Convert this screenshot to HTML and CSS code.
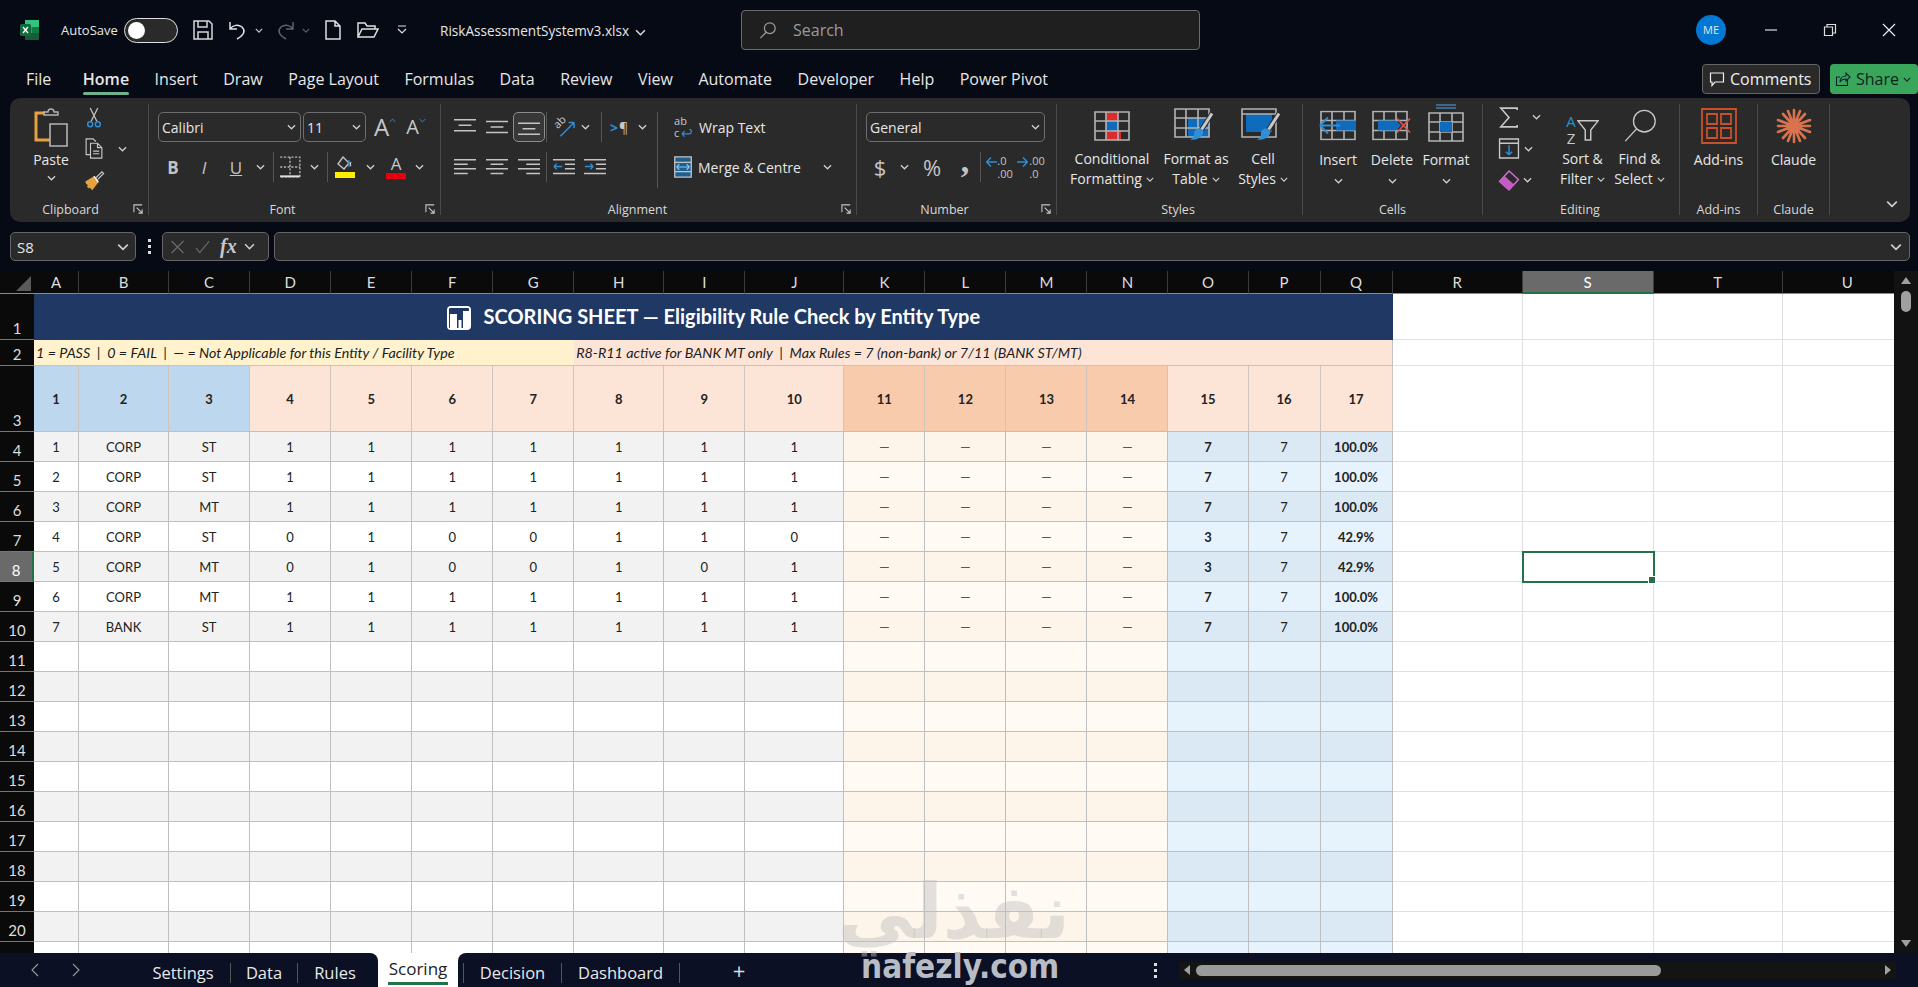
FILE: index.html
```html
<!DOCTYPE html>
<html lang="en">

<head>
    <meta charset="UTF-8">
    <title>RiskAssessmentSystemv3.xlsx - Excel</title>
    <link rel="stylesheet" href="styles.css">
</head>

<body>
    <svg class="sprite">
        <symbol id="chev" viewBox="0 0 10 6"><path d="M1 1l4 4 4-4" fill="none" stroke="currentColor" stroke-width="1.4"/></symbol>
        <symbol id="launch" viewBox="0 0 12 12"><path d="M1 9V1h9M4 4l6 6M10 6v4H6" fill="none" stroke="#c8c8c8" stroke-width="1.2"/></symbol>
        <symbol id="grid" viewBox="0 0 36 30"><path d="M1 1h34v28H1zM1 10h34M1 20h34M12 1v28M24 1v28" fill="none" stroke="#b4b4b4" stroke-width="1.6"/></symbol>
        <symbol id="brush" viewBox="0 0 24 30"><path d="M22 2L11 19" stroke="#2a2a2a" stroke-width="5" fill="none"/><path d="M22 2L11 19" stroke="#c9c9c9" stroke-width="3" fill="none"/><path d="M9 17c4 0 6 3 3 7-2 3-7 5-12 4 3-1 4-3 4-6s2-5 5-5z" fill="#2e8fd6"/></symbol>
    </svg>

    <header class="titlebar">
        <svg class="logo" viewBox="0 0 19 20"><path d="M5 0h12a2 2 0 0 1 2 2v16a2 2 0 0 1-2 2H5z" fill="#21a366"/><path d="M5 0h14v7H5z" fill="#33c481"/><path d="M12 7h7v6h-7z" fill="#107c41"/><path d="M5 13h14v5a2 2 0 0 1-2 2H5z" fill="#185c37"/><rect y="4" width="11" height="12" rx="1.5" fill="#0f6b3a"/><path d="M3 7l5 6M8 7l-5 6" stroke="#fff" stroke-width="1.4"/></svg>
        <span class="autosave">AutoSave</span>
        <span class="toggle"><i></i></span>
        <svg class="qa save" viewBox="0 0 20 20"><path d="M1 1h15l3 3v15H1zM5 1v6h9V1M5 19v-7h10v7" fill="none" stroke="#d6d6d6" stroke-width="1.5"/></svg>
        <svg class="qa undo" viewBox="0 0 20 20"><path d="M2 2v7h7M2 9c3-4 8-5 12-2 4 4 2 8-5 12" fill="none" stroke="#e0e0e0" stroke-width="1.5"/></svg>
        <svg class="qchev"><use href="#chev"/></svg>
        <svg class="qa redo" viewBox="0 0 20 20"><path d="M18 2v7h-7M18 9c-3-4-8-5-12-2-4 4-2 8 5 12" fill="none" stroke="#5e6269" stroke-width="1.5"/></svg>
        <svg class="qchev dim"><use href="#chev"/></svg>
        <svg class="qa newfile" viewBox="0 0 16 20"><path d="M1 1h9l5 5v13H1zM10 1v5h5" fill="none" stroke="#e0e0e0" stroke-width="1.5"/></svg>
        <svg class="qa open" viewBox="0 0 22 18"><path d="M1 16V2h7l2 3h8v3M1 16l4-8h16l-4 8z" fill="none" stroke="#e0e0e0" stroke-width="1.5"/></svg>
        <svg class="qa more" viewBox="0 0 10 10"><path d="M1 1h8M1 4l4 4 4-4" fill="none" stroke="#ddd" stroke-width="1.2"/></svg>
        <div class="filename">RiskAssessmentSystemv3.xlsx <svg class="namechev"><use href="#chev"/></svg></div>
        <div class="search">
            <svg viewBox="0 0 20 20"><circle cx="12" cy="8" r="6" fill="none" stroke="#9a9a9a" stroke-width="1.4"/><path d="M8 12.5L1.5 19" stroke="#9a9a9a" stroke-width="1.4"/></svg>
            <span>Search</span>
        </div>
        <div class="winctl">
            <span class="avatar">ME</span>
            <span class="wbtn"><svg viewBox="0 0 14 14"><path d="M1 7h12" stroke="#ddd" stroke-width="1.2"/></svg></span>
            <span class="wbtn"><svg viewBox="0 0 14 14"><path d="M1.5 4h8v8.5h-8zM4 4V1.5h8.5V10H10" fill="none" stroke="#ddd" stroke-width="1.2"/></svg></span>
            <span class="wbtn"><svg viewBox="0 0 14 14"><path d="M1 1l12 12M13 1L1 13" stroke="#eee" stroke-width="1.2"/></svg></span>
        </div>
    </header>

    <nav class="tabsrow">
        <a>File</a>
        <a class="home">Home</a>
        <a>Insert</a>
        <a>Draw</a>
        <a>Page Layout</a>
        <a>Formulas</a>
        <a>Data</a>
        <a>Review</a>
        <a>View</a>
        <a>Automate</a>
        <a>Developer</a>
        <a>Help</a>
        <a>Power Pivot</a>
        <div class="tabbtns">
            <button class="comments"><svg viewBox="0 0 16 16"><path d="M1.5 2h13v9H6l-3 3.5V11H1.5z" fill="none" stroke="#eee" stroke-width="1.2"/></svg>Comments</button>
            <button class="share"><svg viewBox="0 0 16 16"><path d="M5 6H1.5v8.5h11V9M5 11c0-4 3-6 6-6V2l4 4-4 4V8c-3 0-5 1-6 3z" fill="none" stroke="#123" stroke-width="1.1"/></svg>Share<svg class="sharechev"><use href="#chev"/></svg></button>
        </div>
    </nav>

    <section class="ribbon">
        <div class="grp g-clip">
            <div class="gbody flexrow">
                <div class="paste">
                    <svg viewBox="0 0 36 40"><path d="M12 6H3v27h14" fill="none" stroke="#e6a23c" stroke-width="3"/><path d="M11 8V5h4c0-4 6-4 6 0h4v3z" fill="none" stroke="#b4b4b4" stroke-width="1.4"/><path d="M17 17h17v22H17z" fill="#2a2a2a" stroke="#b4b4b4" stroke-width="1.6"/></svg>
                    <span>Paste</span>
                    <svg class="chevron"><use href="#chev"/></svg>
                </div>
                <div class="stack">
                    <div class="sm"><svg viewBox="0 0 16 22"><path d="M4 1l7 14M12 1L5 15" stroke="#c8c8c8" stroke-width="1.3"/><circle cx="4" cy="18" r="2.6" fill="none" stroke="#2e8fd6" stroke-width="1.5"/><circle cx="12" cy="18" r="2.6" fill="none" stroke="#2e8fd6" stroke-width="1.5"/></svg></div>
                    <div class="sm"><svg viewBox="0 0 22 24"><path d="M7 19H2V1h8l3 3M7 6h8l5 5v12H7zM15 6v5h5M10 15h7M10 18h7" fill="none" stroke="#c8c8c8" stroke-width="1.3"/></svg><svg class="chevron ml10"><use href="#chev"/></svg></div>
                    <div class="sm"><svg viewBox="0 0 22 24"><path d="M13 9l7-7 2 2-7 7" fill="none" stroke="#c8c8c8" stroke-width="1.4"/><path d="M1 13l10-6 5 7-7 9-3-3-1 1-2-2 1-2-2-1z" fill="#e6a23c"/><path d="M11 7l5 7" stroke="#f5f5f5" stroke-width="1.6"/></svg></div>
                </div>
            </div>
            <div class="glabel">Clipboard</div>
            <svg class="launcher"><use href="#launch"/></svg>
        </div>

        <div class="grp g-font">
            <div class="gbody rows">
                <div class="row">
                    <div class="select w143"><span>Calibri</span><svg class="chevron"><use href="#chev"/></svg></div>
                    <div class="select w63 ml2"><span>11</span><svg class="chevron"><use href="#chev"/></svg></div>
                    <span class="growfont big-a ml8">A<svg viewBox="0 0 10 6"><path d="M1 5l4-4 4 4" fill="none" stroke="#2e8fd6" stroke-width="1.4"/></svg></span>
                    <span class="growfont small-a ml10">A<svg viewBox="0 0 10 6"><path d="M1 1l4 4 4-4" fill="none" stroke="#2e8fd6" stroke-width="1.4"/></svg></span>
                </div>
                <div class="row">
                    <span class="ib w30 letter bold">B</span>
                    <span class="ib w32 letter ital">I</span>
                    <span class="ib w32 letter under">U</span>
                    <span class="ib w16"><svg class="chevron"><use href="#chev"/></svg></span>
                    <span class="ib w10"><i class="sep"></i></span>
                    <span class="ib w24"><svg viewBox="0 0 20 20"><path d="M1 1h18v18H1M10 1v18M1 10h18" fill="none" stroke="#b4b4b4" stroke-width="1.2" stroke-dasharray="2 1.4"/><path d="M1 18.5h18" stroke="#e0e0e0" stroke-width="1.8"/></svg></span>
                    <span class="ib w25"><svg class="chevron"><use href="#chev"/></svg></span>
                    <i class="sep"></i>
                    <span class="ib w34 colorbtn"><svg viewBox="0 0 20 14"><path d="M8 1l6 6-5 6-6-5zM16 6c-1 2-1 3 0 4" fill="none" stroke="#c8c8c8" stroke-width="1.3"/><path d="M14 4v7" stroke="#2e8fd6" stroke-width="1.4"/></svg><b class="yellow"></b></span>
                    <span class="ib w16"><svg class="chevron"><use href="#chev"/></svg></span>
                    <span class="ib w36 colorbtn"><em>A</em><b class="red"></b></span>
                    <span class="ib w10"><svg class="chevron"><use href="#chev"/></svg></span>
                </div>
            </div>
            <div class="glabel">Font</div>
            <svg class="launcher"><use href="#launch"/></svg>
        </div>

        <div class="grp g-align">
            <div class="gbody rows">
                <div class="row">
                    <span class="ib w32"><svg class="al" viewBox="0 0 24 18"><path d="M0 1h24M5 7h14M0 13h24" stroke="#c4c4c4" stroke-width="1.6"/></svg></span>
                    <span class="ib w32"><svg class="al" viewBox="0 0 24 18"><path d="M0 3h24M5 9h14M0 15h24" stroke="#c4c4c4" stroke-width="1.6"/></svg></span>
                    <span class="ib w32 active"><svg class="al" viewBox="0 0 24 18"><path d="M0 5h24M5 11h14M0 17h24" stroke="#c4c4c4" stroke-width="1.6"/></svg></span>
                    <span class="ib w3"><i class="sep"></i></span>
                    <span class="ib w32 orient"><b>ab</b><svg viewBox="0 0 24 24"><path d="M8 22L23 7M23 7h-6M23 7v6" fill="none" stroke="#2e8fd6" stroke-width="1.6"/></svg></span>
                    <span class="ib w10"><svg class="chevron"><use href="#chev"/></svg></span>
                    <span class="ib w11"></span>
                    <i class="sep"></i>
                    <span class="ib w34 rtl"><b>&gt;</b>¶</span>
                    <span class="ib w12"><svg class="chevron"><use href="#chev"/></svg></span>
                    <span class="ib w9"></span>
                    <i class="sep tall"></i>
                    <span class="ib w9"></span>
                    <span class="ib w32 wrapicon"><span>ab<br>c</span><svg viewBox="0 0 12 10"><path d="M1 7h8c3 0 3-5 0-5M1 7l3-3M1 7l3 3" fill="none" stroke="#2e8fd6" stroke-width="1.3"/></svg></span>
                    <span class="rtext">Wrap Text</span>
                </div>
                <div class="row">
                    <span class="ib w32"><svg class="al" viewBox="0 0 24 18"><path d="M0 1h24M0 6h15M0 11h24M0 16h15" stroke="#c4c4c4" stroke-width="1.6"/></svg></span>
                    <span class="ib w32"><svg class="al" viewBox="0 0 24 18"><path d="M0 1h24M5 6h14M0 11h24M5 16h14" stroke="#c4c4c4" stroke-width="1.6"/></svg></span>
                    <span class="ib w32"><svg class="al" viewBox="0 0 24 18"><path d="M0 1h24M9 6h15M0 11h24M9 16h15" stroke="#c4c4c4" stroke-width="1.6"/></svg></span>
                    <span class="ib w3"><i class="sep"></i></span>
                    <span class="ib w32"><svg class="al" viewBox="0 0 24 18"><path d="M0 1h24M13 6h11M13 11h11M0 16h24" stroke="#c4c4c4" stroke-width="1.6"/><path d="M10 8.5H1M1 8.5l3-3M1 8.5l3 3" fill="none" stroke="#2e8fd6" stroke-width="1.5"/></svg></span>
                    <span class="ib w30"><svg class="al" viewBox="0 0 24 18"><path d="M0 1h24M13 6h11M13 11h11M0 16h24" stroke="#c4c4c4" stroke-width="1.6"/><path d="M1 8.5h9M10 8.5l-3-3M10 8.5l-3 3" fill="none" stroke="#2e8fd6" stroke-width="1.5"/></svg></span>
                    <span class="ib w51"></span>
                    <span class="ib w10"></span>
                    <span class="ib w24"><svg viewBox="0 0 20 24"><path d="M1 1h18v22H1z" fill="#1f5f8f" stroke="#c4c4c4" stroke-width="1.4"/><path d="M1 7h18M1 17h18" stroke="#c4c4c4" stroke-width="1.4"/><path d="M3 12h14M3 12l3-3M3 12l3 3M17 12l-3-3M17 12l-3 3" fill="none" stroke="#8cc8f5" stroke-width="1.2"/></svg></span>
                    <span class="ib w3"></span>
                    <span class="rtext mergetext">Merge &amp; Centre</span>
                    <svg class="chevron"><use href="#chev"/></svg>
                </div>
            </div>
            <div class="glabel">Alignment</div>
            <svg class="launcher"><use href="#launch"/></svg>
        </div>

        <div class="grp g-number">
            <div class="gbody rows">
                <div class="row">
                    <div class="select w179"><span>General</span><svg class="chevron"><use href="#chev"/></svg></div>
                </div>
                <div class="row">
                    <span class="ib w28 sym">$</span>
                    <span class="ib w20"><svg class="chevron"><use href="#chev"/></svg></span>
                    <span class="ib w36 sym">%</span>
                    <span class="ib w30 sym comma">,</span>
                    <i class="sep"></i>
                    <span class="ib w36 dec"><svg viewBox="0 0 8 8"><path d="M8 4H1M1 4l3-3M1 4l3 3" fill="none" stroke="#2e8fd6" stroke-width="1"/></svg><span>.0<br>.00</span></span>
                    <span class="ib w28 dec"><svg viewBox="0 0 8 8"><path d="M0 4h7M7 4L4 1M7 4L4 7" fill="none" stroke="#2e8fd6" stroke-width="1"/></svg><span>.00<br>.0</span></span>
                </div>
            </div>
            <div class="glabel">Number</div>
            <svg class="launcher"><use href="#launch"/></svg>
        </div>

        <div class="grp g-styles">
            <div class="gbody flexrow">
                <div class="big w84">
                    <div class="bigicon"><svg class="ic36" viewBox="0 0 36 30"><path d="M12 1h12v9H12zM24 20H12v9h15v-9z" fill="#d92c2c"/><path d="M12 10h12v10H12z" fill="#0f6cbd"/><use href="#grid"/></svg></div>
                    <span>Conditional<br>Formatting<svg class="tchev"><use href="#chev"/></svg></span>
                </div>
                <div class="big w84">
                    <div class="bigicon"><svg class="ic44" viewBox="0 0 44 34"><path d="M14 10h22v19H14z" fill="#0f6cbd"/><use href="#grid" x="0" y="0" width="36" height="30"/><use href="#brush" x="16" y="3" width="24" height="31"/></svg></div>
                    <span>Format as<br>Table<svg class="tchev"><use href="#chev"/></svg></span>
                </div>
                <div class="big w50">
                    <div class="bigicon"><svg class="ic44" viewBox="0 0 44 34"><path d="M5 6h26v18H5z" fill="#0f6cbd"/><path d="M1 1h34v28H1z" fill="none" stroke="#b4b4b4" stroke-width="1.6"/><path d="M1 6h34" stroke="#b4b4b4" stroke-width="1.6"/><use href="#brush" x="16" y="3" width="24" height="31"/></svg></div>
                    <span>Cell<br>Styles<svg class="tchev"><use href="#chev"/></svg></span>
                </div>
            </div>
            <div class="glabel">Styles</div>
        </div>

        <div class="grp g-cells">
            <div class="gbody flexrow">
                <div class="big w54">
                    <div class="bigicon"><svg class="ic40" viewBox="0 0 40 30"><use href="#grid" x="2" width="36" height="30"/><path d="M18 10h20v10H18z" fill="#0f6cbd"/><path d="M22 15H2M2 15l8-8M2 15l8 8" fill="none" stroke="#2e8fd6" stroke-width="2"/></svg></div>
                    <span>Insert</span>
                    <svg class="chevron"><use href="#chev"/></svg>
                </div>
                <div class="big w54">
                    <div class="bigicon"><svg class="ic40" viewBox="0 0 40 30"><use href="#grid" width="36" height="30"/><path d="M6 10h18l5 5-5 5H6z" fill="#0f6cbd"/><path d="M25 8l13 14M38 8L25 22" stroke="#d9534f" stroke-width="1.8"/></svg></div>
                    <span>Delete</span>
                    <svg class="chevron"><use href="#chev"/></svg>
                </div>
                <div class="big w54">
                    <div class="bigicon iconup"><svg class="ic40" viewBox="0 0 36 38"><path d="M8 1h20M8 4h20" stroke="#3f7fb0" stroke-width="1.6"/><use href="#grid" y="8" width="36" height="30"/><path d="M12 18h12v10H12z" fill="#0f6cbd"/></svg></div>
                    <span>Format</span>
                    <svg class="chevron"><use href="#chev"/></svg>
                </div>
            </div>
            <div class="glabel">Cells</div>
        </div>

        <div class="grp g-edit">
            <div class="gbody flexrow">
                <div class="stack w59">
                    <div class="sm"><svg viewBox="0 0 18 18"><path d="M16 2.5V1H2l7 8-7 8h14v-1.5" fill="none" stroke="#c8c8c8" stroke-width="1.4"/></svg><svg class="chevron ml9"><use href="#chev"/></svg></div>
                    <div class="sm"><svg viewBox="0 0 20 20"><path d="M1 1h18v18H1zM1 5h18" fill="none" stroke="#c8c8c8" stroke-width="1.3"/><path d="M10 7v9M10 16l-3-3M10 16l3-3" fill="none" stroke="#2e8fd6" stroke-width="1.4"/></svg><svg class="chevron ml1"><use href="#chev"/></svg></div>
                    <div class="sm"><svg viewBox="0 0 20 20"><path d="M1 11L10 1l9 8-9 10z" fill="none" stroke="#d070d0" stroke-width="1.4"/><path d="M1 11l5-5 9 8-5 5z" fill="#c45cc4"/></svg><svg class="chevron"><use href="#chev"/></svg></div>
                </div>
                <div class="big w57">
                    <div class="bigicon sorticon">
                        <span class="az"><b>A</b><b>Z</b></span>
                        <svg viewBox="0 0 24 24"><path d="M1 2h22l-8 10v11H9V12z" fill="none" stroke="#c8c8c8" stroke-width="1.6"/></svg>
                    </div>
                    <span>Sort &amp;<br>Filter<svg class="tchev"><use href="#chev"/></svg></span>
                </div>
                <div class="big w57">
                    <div class="bigicon"><svg class="ic40" viewBox="0 0 38 38"><circle cx="24" cy="14" r="12.5" fill="none" stroke="#c8c8c8" stroke-width="1.5"/><path d="M15 23L2 37" stroke="#c8c8c8" stroke-width="1.5"/></svg></div>
                    <span>Find &amp;<br>Select<svg class="tchev"><use href="#chev"/></svg></span>
                </div>
            </div>
            <div class="glabel">Editing</div>
        </div>

        <div class="grp g-addins">
            <div class="big wfull">
                <div class="bigicon"><svg class="ic36" viewBox="0 0 36 36"><path d="M1 1h34v34H1zM6 6h10v10H6zM20 6h10v10H20zM6 20h10v10H6zM20 20h10v10H20z" fill="none" stroke="#c8502a" stroke-width="1.8"/></svg></div>
                <span>Add-ins</span>
            </div>
            <div class="glabel lower">Add-ins</div>
        </div>

        <div class="grp g-claude">
            <div class="big wfull">
                <div class="bigicon"><svg class="ic36" viewBox="0 0 36 36"><path d="M18 2v32M2 18h32M7 6l22 24M29 6L7 30M12 3l12 30M24 3L12 33M2 12l32 12M34 12L2 24" stroke="#d9734e" stroke-width="2.6" stroke-linecap="round"/></svg></div>
                <span>Claude</span>
            </div>
            <div class="glabel lower">Claude</div>
        </div>

        <svg class="collapse"><use href="#chev"/></svg>
    </section>

    <section class="formulabar">
        <div class="namebox"><span>S8</span><svg class="chevron"><use href="#chev"/></svg></div>
        <div class="dots"><i></i><i></i><i></i></div>
        <div class="fxbox">
            <svg viewBox="0 0 14 14"><path d="M1 1l12 12M13 1L1 13" stroke="#6c6c6c" stroke-width="1.2"/></svg>
            <svg viewBox="0 0 16 14"><path d="M1 8l4 5L15 1" fill="none" stroke="#6c6c6c" stroke-width="1.2"/></svg>
            <em>fx</em>
            <svg class="chevron"><use href="#chev"/></svg>
        </div>
        <div class="fxinput"><svg class="chevron"><use href="#chev"/></svg></div>
    </section>

    <main class="sheet">
        <div class="gridwrap">
            <table class="grid">
                <thead>
                    <tr>
                        <th class="corner"><svg viewBox="0 0 15 15"><path d="M15 0v15H0z" fill="#5a5a5a"/></svg></th>
                        <th>A</th><th>B</th><th>C</th><th>D</th><th>E</th><th>F</th><th>G</th><th>H</th><th>I</th><th>J</th><th>K</th><th>L</th><th>M</th><th>N</th><th>O</th><th>P</th><th>Q</th><th>R</th><th class="cur">S</th><th>T</th><th>U</th>
                    </tr>
                </thead>
                <tbody>
                    <tr class="r1"><th>1</th><td colspan="17" class="title"><svg viewBox="0 0 24 24"><rect width="24" height="24" rx="4" fill="#fff"/><rect x="2" y="2" width="20" height="20" rx="1" fill="#1f3864"/><path d="M3 8h7v14H3zM11.5 14h3v8h-3zM16 5h6v17h-6z" fill="#fff"/></svg>SCORING SHEET — Eligibility Rule Check by Entity Type</td><td></td><td></td><td></td><td></td></tr>
                    <tr class="r2"><th>2</th><td colspan="7" class="cream">1 = PASS &nbsp;|&nbsp; 0 = FAIL &nbsp;|&nbsp; — = Not Applicable for this Entity / Facility Type</td><td colspan="10" class="peach">R8-R11 active for BANK MT only &nbsp;|&nbsp; Max Rules = 7 (non-bank) or 7/11 (BANK ST/MT)</td><td></td><td></td><td></td><td></td></tr>
                    <tr class="r3"><th>3</th><td>1</td><td>2</td><td>3</td><td>4</td><td>5</td><td>6</td><td>7</td><td>8</td><td>9</td><td>10</td><td>11</td><td>12</td><td>13</td><td>14</td><td>15</td><td>16</td><td>17</td><td></td><td></td><td></td><td></td></tr>
                    <tr class="d"><th>4</th><td>1</td><td>CORP</td><td>ST</td><td>1</td><td>1</td><td>1</td><td>1</td><td>1</td><td>1</td><td>1</td><td>—</td><td>—</td><td>—</td><td>—</td><td>7</td><td>7</td><td>100.0%</td><td></td><td></td><td></td><td></td></tr>
                    <tr class="d"><th>5</th><td>2</td><td>CORP</td><td>ST</td><td>1</td><td>1</td><td>1</td><td>1</td><td>1</td><td>1</td><td>1</td><td>—</td><td>—</td><td>—</td><td>—</td><td>7</td><td>7</td><td>100.0%</td><td></td><td></td><td></td><td></td></tr>
                    <tr class="d"><th>6</th><td>3</td><td>CORP</td><td>MT</td><td>1</td><td>1</td><td>1</td><td>1</td><td>1</td><td>1</td><td>1</td><td>—</td><td>—</td><td>—</td><td>—</td><td>7</td><td>7</td><td>100.0%</td><td></td><td></td><td></td><td></td></tr>
                    <tr class="d"><th>7</th><td>4</td><td>CORP</td><td>ST</td><td>0</td><td>1</td><td>0</td><td>0</td><td>1</td><td>1</td><td>0</td><td>—</td><td>—</td><td>—</td><td>—</td><td>3</td><td>7</td><td>42.9%</td><td></td><td></td><td></td><td></td></tr>
                    <tr class="d"><th class="cur">8</th><td>5</td><td>CORP</td><td>MT</td><td>0</td><td>1</td><td>0</td><td>0</td><td>1</td><td>0</td><td>1</td><td>—</td><td>—</td><td>—</td><td>—</td><td>3</td><td>7</td><td>42.9%</td><td></td><td class="sel"></td><td></td><td></td></tr>
                    <tr class="d"><th>9</th><td>6</td><td>CORP</td><td>MT</td><td>1</td><td>1</td><td>1</td><td>1</td><td>1</td><td>1</td><td>1</td><td>—</td><td>—</td><td>—</td><td>—</td><td>7</td><td>7</td><td>100.0%</td><td></td><td></td><td></td><td></td></tr>
                    <tr class="d"><th>10</th><td>7</td><td>BANK</td><td>ST</td><td>1</td><td>1</td><td>1</td><td>1</td><td>1</td><td>1</td><td>1</td><td>—</td><td>—</td><td>—</td><td>—</td><td>7</td><td>7</td><td>100.0%</td><td></td><td></td><td></td><td></td></tr>
                    <tr class="d"><th>11</th><td></td><td></td><td></td><td></td><td></td><td></td><td></td><td></td><td></td><td></td><td></td><td></td><td></td><td></td><td></td><td></td><td></td><td></td><td></td><td></td><td></td></tr>
                    <tr class="d"><th>12</th><td></td><td></td><td></td><td></td><td></td><td></td><td></td><td></td><td></td><td></td><td></td><td></td><td></td><td></td><td></td><td></td><td></td><td></td><td></td><td></td><td></td></tr>
                    <tr class="d"><th>13</th><td></td><td></td><td></td><td></td><td></td><td></td><td></td><td></td><td></td><td></td><td></td><td></td><td></td><td></td><td></td><td></td><td></td><td></td><td></td><td></td><td></td></tr>
                    <tr class="d"><th>14</th><td></td><td></td><td></td><td></td><td></td><td></td><td></td><td></td><td></td><td></td><td></td><td></td><td></td><td></td><td></td><td></td><td></td><td></td><td></td><td></td><td></td></tr>
                    <tr class="d"><th>15</th><td></td><td></td><td></td><td></td><td></td><td></td><td></td><td></td><td></td><td></td><td></td><td></td><td></td><td></td><td></td><td></td><td></td><td></td><td></td><td></td><td></td></tr>
                    <tr class="d"><th>16</th><td></td><td></td><td></td><td></td><td></td><td></td><td></td><td></td><td></td><td></td><td></td><td></td><td></td><td></td><td></td><td></td><td></td><td></td><td></td><td></td><td></td></tr>
                    <tr class="d"><th>17</th><td></td><td></td><td></td><td></td><td></td><td></td><td></td><td></td><td></td><td></td><td></td><td></td><td></td><td></td><td></td><td></td><td></td><td></td><td></td><td></td><td></td></tr>
                    <tr class="d"><th>18</th><td></td><td></td><td></td><td></td><td></td><td></td><td></td><td></td><td></td><td></td><td></td><td></td><td></td><td></td><td></td><td></td><td></td><td></td><td></td><td></td><td></td></tr>
                    <tr class="d"><th>19</th><td></td><td></td><td></td><td></td><td></td><td></td><td></td><td></td><td></td><td></td><td></td><td></td><td></td><td></td><td></td><td></td><td></td><td></td><td></td><td></td><td></td></tr>
                    <tr class="d"><th>20</th><td></td><td></td><td></td><td></td><td></td><td></td><td></td><td></td><td></td><td></td><td></td><td></td><td></td><td></td><td></td><td></td><td></td><td></td><td></td><td></td><td></td></tr>
                    <tr class="d"><th></th><td></td><td></td><td></td><td></td><td></td><td></td><td></td><td></td><td></td><td></td><td></td><td></td><td></td><td></td><td></td><td></td><td></td><td></td><td></td><td></td><td></td></tr>
                </tbody>
            </table>
        </div>
        <div class="vbar">
            <i class="up"></i>
            <i class="thumb"></i>
            <i class="down"></i>
        </div>
    </main>

    <footer class="sheetbar">
        <div class="barleft">
            <span class="nav"><svg viewBox="0 0 8 14"><path d="M7 1L1 7l6 6" fill="none" stroke="#999" stroke-width="1.1"/></svg></span>
            <span class="nav"><svg viewBox="0 0 8 14"><path d="M1 1l6 6-6 6" fill="none" stroke="#999" stroke-width="1.1"/></svg></span>
            <span class="spacer40"></span>
            <a class="stab t95">Settings</a>
            <a class="stab t67">Data</a>
            <a class="stab t74">Rules</a>
        </div>
        <a class="activetab"><span>Scoring</span></a>
        <div class="barright">
            <span class="spacer5"></span>
            <a class="stab t99">Decision</a>
            <a class="stab t118">Dashboard</a>
            <span class="plus">+</span>
            <span class="vdots"><i></i><i></i><i></i></span>
            <div class="hbar">
                <i class="hleft"></i>
                <i class="hthumb"></i>
                <i class="hright"></i>
            </div>
        </div>
    </footer>

    <div class="wm-ar" lang="ar" dir="rtl">نفذلي</div>
    <div class="wm-en">nafezly.com</div>
</body>

</html>
```

FILE: styles.css
```css
* {
    box-sizing: border-box;
}

body {
    margin: 0;
    width: 1918px;
    height: 987px;
    overflow: hidden;
    display: flex;
    flex-direction: column;
    position: relative;
    background: #060a14;
    color: #e6e6e6;
    font-family: "Open Sans", "Noto Sans", sans-serif;
}

.sprite {
    position: absolute;
    width: 0;
    height: 0;
}

/* title bar */
.titlebar {
    height: 60px;
    display: flex;
    align-items: center;
    padding-left: 20px;
    flex-shrink: 0;
}

.logo {
    width: 19px;
    height: 20px;
}

.autosave {
    margin-left: 22px;
    width: 55px;
    font-size: 13px;
    white-space: nowrap;
}

.toggle {
    margin-left: 8px;
    width: 54px;
    height: 25px;
    border: 1.5px solid #e0e0e0;
    border-radius: 13px;
    background: #2a2a2a;
    display: flex;
    align-items: center;
    padding-left: 3px;
}

.toggle i {
    width: 17px;
    height: 17px;
    border-radius: 50%;
    background: #fff;
}

.qa {
    width: 20px;
    height: 20px;
    margin-left: 15px;
}

.undo,
.redo {
    height: 22px;
}

.qchev {
    width: 8px;
    height: 5px;
    margin-left: 7px;
    color: #ccc;
}

.qchev.dim {
    color: #5e6269;
}

.redo {
    margin-left: 12px;
}

.newfile {
    width: 16px;
    margin-left: 15px;
}

.open {
    width: 22px;
    margin-left: 16px;
}

.more {
    width: 10px;
    height: 10px;
    margin-left: 18px;
}

.filename {
    margin-left: 33px;
    width: 301px;
    flex-shrink: 0;
    font-size: 13.6px;
    white-space: nowrap;
}

.namechev {
    width: 11px;
    height: 7px;
    margin-left: 2px;
    color: #ddd;
}

.search {
    width: 459px;
    height: 40px;
    background: #1f1f1f;
    border: 1px solid #6a6a6a;
    border-radius: 4px;
    display: flex;
    align-items: center;
    padding-left: 17px;
    color: #9a9a9a;
    font-size: 16px;
}

.search svg {
    width: 18px;
    height: 18px;
    margin-right: 16px;
}

.winctl {
    margin-left: auto;
    display: flex;
    align-items: center;
}

.avatar {
    width: 30px;
    height: 30px;
    border-radius: 50%;
    background: #0078d4;
    font-size: 11px;
    line-height: 30px;
    text-align: center;
    margin-right: 15px;
}

.wbtn {
    width: 59px;
    display: flex;
    justify-content: center;
}

.wbtn svg {
    width: 14px;
    height: 14px;
}

/* ribbon tabs */
.tabsrow {
    height: 38px;
    display: flex;
    align-items: center;
    padding-left: 26px;
    gap: 25.5px;
    font-size: 16px;
    flex-shrink: 0;
}

.tabsrow a {
    white-space: nowrap;
    position: relative;
}

.tabsrow .home {
    font-weight: 600;
    margin-left: 6px;
}

.tabsrow .home::after {
    content: "";
    position: absolute;
    left: 0;
    right: 0;
    bottom: -5px;
    height: 3px;
    border-radius: 2px;
    background: #6db38e;
}

.tabbtns {
    margin-left: auto;
    display: flex;
    gap: 10px;
}

.tabbtns button {
    height: 30px;
    border-radius: 4px;
    display: flex;
    align-items: center;
    font-family: inherit;
    font-size: 16px;
}

.comments {
    width: 118px;
    background: #2a2a2a;
    border: 1px solid #666;
    color: #eee;
    padding: 0 0 0 6px;
}

.comments svg {
    width: 16px;
    height: 16px;
    margin-right: 5px;
}

.share {
    width: 88px;
    background: #3aa65c;
    border: none;
    border-radius: 4px 0 0 4px;
    color: #10241a;
    padding: 0 0 0 5px;
}

.share svg {
    width: 16px;
    height: 16px;
    margin-right: 5px;
    flex-shrink: 0;
}

.share .sharechev {
    width: 8px;
    height: 5px;
    margin: 0 0 0 4px;
}

/* ribbon */
.ribbon {
    margin-left: 10px;
    width: 1900px;
    height: 124px;
    background: #2a2a2a;
    border-radius: 10px;
    display: flex;
    position: relative;
    flex-shrink: 0;
    font-size: 14px;
}

.grp {
    position: relative;
    height: 111px;
    margin-top: 6px;
    border-right: 1px solid #4a4a4a;
    flex-shrink: 0;
}

.g-clip { width: 139px; }
.g-font { width: 292px; padding-left: 9px; }
.g-align { width: 416px; padding-left: 8px; }
.g-number { width: 200px; padding-left: 9px; }
.g-styles { width: 246px; padding-left: 13px; }
.g-cells { width: 180px; padding-left: 8px; }
.g-edit { width: 197px; padding-left: 12px; }
.g-addins { width: 78px; }
.g-claude { width: 72px; }

.gbody {
    height: 92px;
}

.glabel {
    position: absolute;
    left: 0;
    right: 0;
    bottom: -4px;
    text-align: center;
    font-size: 12.5px;
    line-height: 18px;
    color: #d8d8d8;
}

.g-clip .glabel { right: 17px; }
.g-font .glabel { right: 24px; }
.g-align .glabel { right: 22px; }
.g-number .glabel { right: 24px; }
.g-styles .glabel { right: 3px; }
.g-edit .glabel { right: 2px; }

.launcher {
    position: absolute;
    right: 4px;
    bottom: 0;
    width: 11px;
    height: 11px;
}

.flexrow {
    display: flex;
}

.rows {
    display: flex;
    flex-direction: column;
    gap: 10px;
    padding-top: 8px;
}

.row {
    display: flex;
    align-items: center;
    height: 30px;
}

.chevron {
    width: 9px;
    height: 6px;
    color: #d0d0d0;
    flex-shrink: 0;
}

.paste {
    width: 70px;
    padding-left: 12px;
    display: flex;
    flex-direction: column;
    align-items: center;
    flex-shrink: 0;
}

.paste svg:first-child {
    width: 36px;
    height: 40px;
    margin-top: 3px;
}

.paste span {
    margin-top: 3px;
    line-height: 20px;
}

.paste .chevron {
    margin-top: 5px;
}

.stack {
    padding-top: 3px;
    display: flex;
    flex-direction: column;
    gap: 11.5px;
}

.sm {
    height: 20px;
    display: flex;
    align-items: center;
}

.sm > svg:first-child {
    width: 28px;
    height: 21px;
}

.ml1 { margin-left: 1px; }
.ml2 { margin-left: 2px; }
.ml8 { margin-left: 8px; }
.ml9 { margin-left: 9px; }
.ml10 { margin-left: 10px; }

.select {
    height: 30px;
    border: 1px solid #6e6e6e;
    border-radius: 5px;
    display: flex;
    align-items: center;
    justify-content: space-between;
    padding: 0 4px 0 3px;
    font-size: 14px;
    flex-shrink: 0;
}

.w143 { width: 143px; }
.w63 { width: 63px; }
.w179 { width: 179px; }

.growfont {
    display: flex;
    color: #c8c8c8;
}

.growfont svg {
    width: 7px;
    height: 5px;
    margin-top: 6px;
}

.big-a { font-size: 24px; line-height: 30px; }
.small-a { font-size: 20px; line-height: 30px; }

.ib {
    height: 30px;
    display: flex;
    align-items: center;
    justify-content: center;
    flex-shrink: 0;
}

.ib > svg:not(.chevron) {
    width: 22px;
    height: 22px;
}

.ib .al {
    width: 24px;
    height: 18px;
}

.w3 { width: 3px; }
.w9 { width: 9px; }
.w10 { width: 10px; }
.w11 { width: 11px; }
.w12 { width: 12px; }
.w16 { width: 16px; }
.w20 { width: 20px; }
.w24 { width: 24px; }
.w25 { width: 25px; }
.w28 { width: 28px; }
.w30 { width: 30px; }
.w32 { width: 32px; }
.w34 { width: 34px; }
.w36 { width: 36px; }
.w50 { width: 50px; }
.w51 { width: 51px; }
.w54 { width: 54px; }
.w57 { width: 57px; }
.w59 { width: 59px; }
.w84 { width: 84px; }
.wfull { width: 100%; }

.letter {
    font-size: 17px;
    color: #c4c4c4;
}

.bold { font-weight: 700; }
.ital { font-style: italic; }
.under { text-decoration: underline; }

.sep {
    display: block;
    width: 1px;
    height: 30px;
    background: #555;
    flex-shrink: 0;
}

.sep.tall {
    height: 76px;
    align-self: flex-start;
}

.colorbtn {
    flex-direction: column;
    gap: 0;
}

.ib.colorbtn > svg {
    width: 20px;
    height: 14px;
}

.colorbtn em {
    font-style: normal;
    font-size: 17px;
    line-height: 15px;
    color: #c8c8c8;
}

.colorbtn b {
    width: 20px;
    height: 6px;
    margin-top: 2px;
}

.yellow { background: #ffee00; }
.red { background: #e8000f; }

.active {
    border: 1px solid #8c8c8c;
    border-radius: 5px;
    background: #383838;
}

.orient {
    position: relative;
}

.orient b {
    position: absolute;
    left: 5px;
    top: 4px;
    font-size: 11px;
    font-weight: 400;
    line-height: 12px;
    color: #c8c8c8;
    transform: rotate(-45deg);
}

.rtl {
    font-size: 14px;
    color: #c8c8c8;
}

.rtl b {
    color: #2e8fd6;
    margin-right: 1px;
}

.wrapicon {
    font-size: 11px;
    line-height: 12px;
    color: #c8c8c8;
    text-align: left;
}

.ib.wrapicon > svg {
    width: 11px;
    height: 10px;
    margin: 9px 0 0 -6px;
}

.rtext {
    font-size: 14px;
    white-space: nowrap;
}

.mergetext {
    width: 125px;
    flex-shrink: 0;
}

.sym {
    font-size: 22px;
    color: #c4c4c4;
}

.comma {
    font-family: "Liberation Serif", serif;
    font-size: 34px;
    font-weight: 700;
    line-height: 20px;
    padding-bottom: 12px;
}

.dec {
    font-size: 11px;
    line-height: 13px;
    color: #c4c4c4;
}

.ib.dec > svg {
    width: 12px;
    height: 12px;
    margin-bottom: 10px;
}

.big {
    display: flex;
    flex-direction: column;
    align-items: center;
    text-align: center;
    line-height: 20px;
    flex-shrink: 0;
}

.bigicon {
    height: 45px;
    display: flex;
    align-items: flex-end;
    justify-content: center;
    padding-bottom: 7px;
}

.big > .chevron {
    margin-top: 7px;
}

.g-cells .big span,
.g-addins span,
.g-claude span {
    line-height: 22px;
}

.ic36 {
    width: 36px;
    height: 32px;
}

.g-addins .bigicon,
.g-claude .bigicon {
    padding-bottom: 5px;
}

.g-addins .ic36,
.g-claude .ic36 {
    height: 36px;
}

.ic40 {
    width: 40px;
    height: 33px;
}

.iconup .ic40 {
    height: 38px;
}

.ic44 {
    width: 44px;
    height: 34px;
}

.sorticon {
    gap: 1px;
    align-items: center;
    padding-bottom: 0;
}

.sorticon svg {
    width: 22px;
    height: 22px;
    margin-top: 6px;
}

.az {
    display: flex;
    flex-direction: column;
    font-size: 15px;
    line-height: 17px;
    margin-top: 6px;
    color: #c8c8c8;
}

.az b {
    font-weight: 400;
}

.az b:first-child {
    color: #2e8fd6;
}

.tchev {
    width: 8px;
    height: 5px;
    margin: 0 0 2px 4px;
    color: #d0d0d0;
}

.collapse {
    position: absolute;
    right: 12px;
    bottom: 14px;
    width: 12px;
    height: 8px;
    color: #d0d0d0;
}

/* formula bar */
.formulabar {
    margin: 10px 8px 10px 10px;
    height: 29px;
    display: flex;
    align-items: stretch;
    flex-shrink: 0;
}

.namebox,
.fxbox,
.fxinput {
    background: #2a2a2a;
    border: 1px solid #666;
    border-radius: 5px;
    display: flex;
    align-items: center;
}

.namebox {
    width: 126px;
    justify-content: space-between;
    padding: 0 6px;
    font-size: 15px;
}

.namebox .chevron {
    width: 12px;
    height: 8px;
}

.dots {
    width: 26px;
    display: flex;
    flex-direction: column;
    align-items: center;
    justify-content: center;
    gap: 3px;
}

.dots i,
.vdots i {
    width: 3px;
    height: 3px;
    background: #ddd;
}

.fxbox {
    width: 107px;
    padding-left: 7px;
    gap: 10px;
    background: #2b2b2b;
}

.fxbox svg {
    width: 15px;
    height: 14px;
}

.fxbox em {
    font-family: "Liberation Serif", serif;
    font-size: 20px;
    font-weight: 700;
    color: #c8c8c8;
    margin-right: -3px;
}

.fxbox .chevron {
    width: 11px;
    height: 7px;
}

.fxinput {
    margin-left: 5px;
    flex: 1;
    justify-content: flex-end;
    padding-right: 7px;
}

.fxinput .chevron {
    width: 12px;
    height: 8px;
}

/* sheet */
.sheet {
    height: 682px;
    display: flex;
    flex-shrink: 0;
}

.gridwrap {
    width: 1894px;
    height: 682px;
    overflow: hidden;
    background: #fff;
}

.grid {
    table-layout: fixed;
    width: 1913px;
    border-collapse: separate;
    border-spacing: 0;
    font-family: Lato, "Liberation Sans", sans-serif;
    font-size: 13px;
    color: #222;
}

.grid th,
.grid td {
    padding: 0;
    text-align: center;
    overflow: hidden;
}

.grid thead th {
    height: 23px;
    background: #0a0a0a;
    color: #ddd;
    font-weight: 400;
    font-size: 15px;
    border-right: 1px solid #3c3c3c;
    border-bottom: 1px solid #8a8a8a;
}

.grid thead th:nth-child(1) { width: 34px; }
.grid thead th:nth-child(2) { width: 45px; }
.grid thead th:nth-child(3) { width: 90px; }
.grid thead th:nth-child(4) { width: 81px; }
.grid thead th:nth-child(5) { width: 81px; }
.grid thead th:nth-child(6) { width: 81px; }
.grid thead th:nth-child(7) { width: 81px; }
.grid thead th:nth-child(8) { width: 81px; }
.grid thead th:nth-child(9) { width: 90px; }
.grid thead th:nth-child(10) { width: 81px; }
.grid thead th:nth-child(11) { width: 99px; }
.grid thead th:nth-child(12) { width: 81px; }
.grid thead th:nth-child(13) { width: 81px; }
.grid thead th:nth-child(14) { width: 81px; }
.grid thead th:nth-child(15) { width: 81px; }
.grid thead th:nth-child(16) { width: 80px; }
.grid thead th:nth-child(17) { width: 72px; }
.grid thead th:nth-child(18) { width: 72px; }
.grid thead th:nth-child(19) { width: 130px; }
.grid thead th:nth-child(20) { width: 131px; }
.grid thead th:nth-child(21) { width: 129px; }
.grid thead th:nth-child(22) { width: 130px; }

.grid thead .corner {
    border-right: none;
    text-align: right;
    padding: 2px 3px 0 0;
    line-height: 0;
}

.corner svg {
    width: 15px;
    height: 15px;
}

.grid thead .cur {
    background: #6a6a6a;
    color: #fff;
    border-bottom: 2px solid #217346;
}

.grid tbody th {
    background: #0a0a0a;
    color: #ddd;
    font-weight: 400;
    font-size: 15px;
    vertical-align: bottom;
    border-bottom: 1px solid #777;
    line-height: 20px;
    padding-bottom: 1px;
}

.grid tbody th.cur {
    background: #6a6a6a;
    color: #fff;
    border-right: 2px solid #217346;
}

.grid td {
    border-right: 1px solid #e0e0e0;
    border-bottom: 1px solid #e0e0e0;
}

.r1 th,
.r1 td {
    height: 46px;
}

.r2 th,
.r2 td {
    height: 26px;
}

.r3 th,
.r3 td {
    height: 66px;
}

.d th,
.d td {
    height: 30px;
}

.grid .title {
    background: #1f3864;
    color: #fff;
    font-size: 20px;
    font-weight: 700;
    border: none;
}

.title svg {
    width: 24px;
    height: 24px;
    vertical-align: -6px;
    margin-right: 13px;
}

.grid .cream,
.grid .peach {
    background: #fff2cc;
    font-style: italic;
    font-size: 14.3px;
    text-align: left;
    padding-left: 2px;
    color: #1c1c1c;
    white-space: nowrap;
    border-right: none;
    border-bottom: 1px solid #c4c4c4;
}

.grid .peach {
    background: #fce4d6;
    border-right: 1px solid #c4c4c4;
}

.r3 td {
    font-weight: 700;
    background: #fce4d6;
    border-right-color: #cfc4bc;
    border-bottom-color: #bfbfbf;
}

.r3 td:nth-child(-n+4) {
    background: #bdd7ee;
}

.r3 td:nth-child(n+12):nth-child(-n+15) {
    background: #f8cbad;
}

.r3 td:nth-child(n+19) {
    background: #fff;
    border-right-color: #e0e0e0;
    border-bottom-color: #e0e0e0;
}

.d td:nth-child(-n+18) {
    border-right-color: #bfbfbf;
    border-bottom-color: #bfbfbf;
}

.d:nth-child(even) td:nth-child(-n+11) {
    background: #f2f2f2;
}

.d td:nth-child(n+12):nth-child(-n+15) {
    background: #fffaf4;
    color: #555;
}

.d:nth-child(even) td:nth-child(n+12):nth-child(-n+15) {
    background: #fef5ea;
}

.d td:nth-child(n+16):nth-child(-n+18) {
    background: #e6f2fc;
}

.d:nth-child(even) td:nth-child(n+16):nth-child(-n+18) {
    background: #dbe9f5;
}

.d td:nth-child(16),
.d td:nth-child(18) {
    font-weight: 700;
}

.grid td.sel {
    position: relative;
    outline: 2px solid #217346;
    outline-offset: -1px;
    overflow: visible;
}

.sel::after {
    content: "";
    position: absolute;
    right: -3px;
    bottom: -3px;
    width: 6px;
    height: 6px;
    background: #217346;
    border: 1px solid #fff;
}

.vbar {
    width: 24px;
    background: #121212;
    display: flex;
    flex-direction: column;
    align-items: center;
    padding: 6px 0;
}

.vbar .up,
.vbar .down {
    width: 0;
    height: 0;
    border-left: 5px solid transparent;
    border-right: 5px solid transparent;
}

.vbar .up {
    border-bottom: 7px solid #a0a0a0;
}

.vbar .down {
    margin-top: auto;
    border-top: 7px solid #a0a0a0;
}

.vbar .thumb {
    width: 10px;
    height: 21px;
    margin-top: 7px;
    border-radius: 5px;
    background: #a0a0a0;
}

/* sheet tabs */
.sheetbar {
    height: 34px;
    background: #fff;
    display: flex;
    flex-shrink: 0;
    font-size: 16.5px;
}

.barleft,
.barright {
    background: #0b1024;
    display: flex;
    align-items: center;
    padding-top: 6px;
}

.barleft {
    width: 378px;
    border-top-right-radius: 8px;
    padding-left: 18px;
}

.barright {
    flex: 1;
    border-top-left-radius: 8px;
}

.nav {
    width: 41px;
    display: flex;
    margin-top: -6px;
}

.nav svg {
    width: 8px;
    height: 14px;
    margin-left: 13px;
}

.spacer40 {
    width: 36px;
}

.spacer5 {
    width: 5px;
}

.stab {
    height: 20px;
    line-height: 20px;
    text-align: center;
    border-right: 1px solid #555;
    color: #e8e8e8;
}

.t95 { width: 95px; }
.t67 { width: 67px; }
.t74 { width: 74px; border-right: none; }
.t99 { width: 99px; border-left: 1px solid #555; }
.t118 { width: 118px; }

.activetab {
    width: 80px;
    background: #fff;
    color: #222;
    text-align: center;
    font-size: 17px;
}

.activetab span {
    display: inline-block;
    height: 32px;
    line-height: 32px;
    padding: 0 1px;
    border-bottom: 3px solid #217346;
}

.plus {
    width: 118px;
    text-align: center;
    font-size: 22px;
    color: #ddd;
    margin-top: -6px;
}

.vdots {
    margin: -6px 0 0 356px;
    display: flex;
    flex-direction: column;
    gap: 3px;
}

.hbar {
    margin: -6px 0 0 22px;
    width: 717px;
    height: 17px;
    background: #141414;
    display: flex;
    align-items: center;
    padding: 0 5px;
}

.hleft,
.hright {
    width: 0;
    height: 0;
    border-top: 5px solid transparent;
    border-bottom: 5px solid transparent;
}

.hleft {
    border-right: 6px solid #a0a0a0;
}

.hright {
    margin-left: auto;
    border-left: 6px solid #a0a0a0;
}

.hthumb {
    width: 465px;
    height: 11px;
    margin-left: 6px;
    border-radius: 6px;
    background: #9a9a9a;
}

/* watermark */
.wm-ar {
    position: absolute;
    left: 858px;
    top: 870px;
    width: 212px;
    font-family: "DejaVu Sans", sans-serif;
    font-weight: 700;
    font-size: 76px;
    line-height: 84px;
    text-align: center;
    color: rgba(190, 190, 190, 0.45);
}

.wm-en {
    position: absolute;
    left: 861px;
    top: 950px;
    width: 196px;
    text-align: center;
    font-family: "DejaVu Sans Condensed", "DejaVu Sans", sans-serif;
    font-weight: 700;
    font-size: 33px;
    line-height: 34px;
    color: #b8bcc4;
    white-space: nowrap;
}
```
